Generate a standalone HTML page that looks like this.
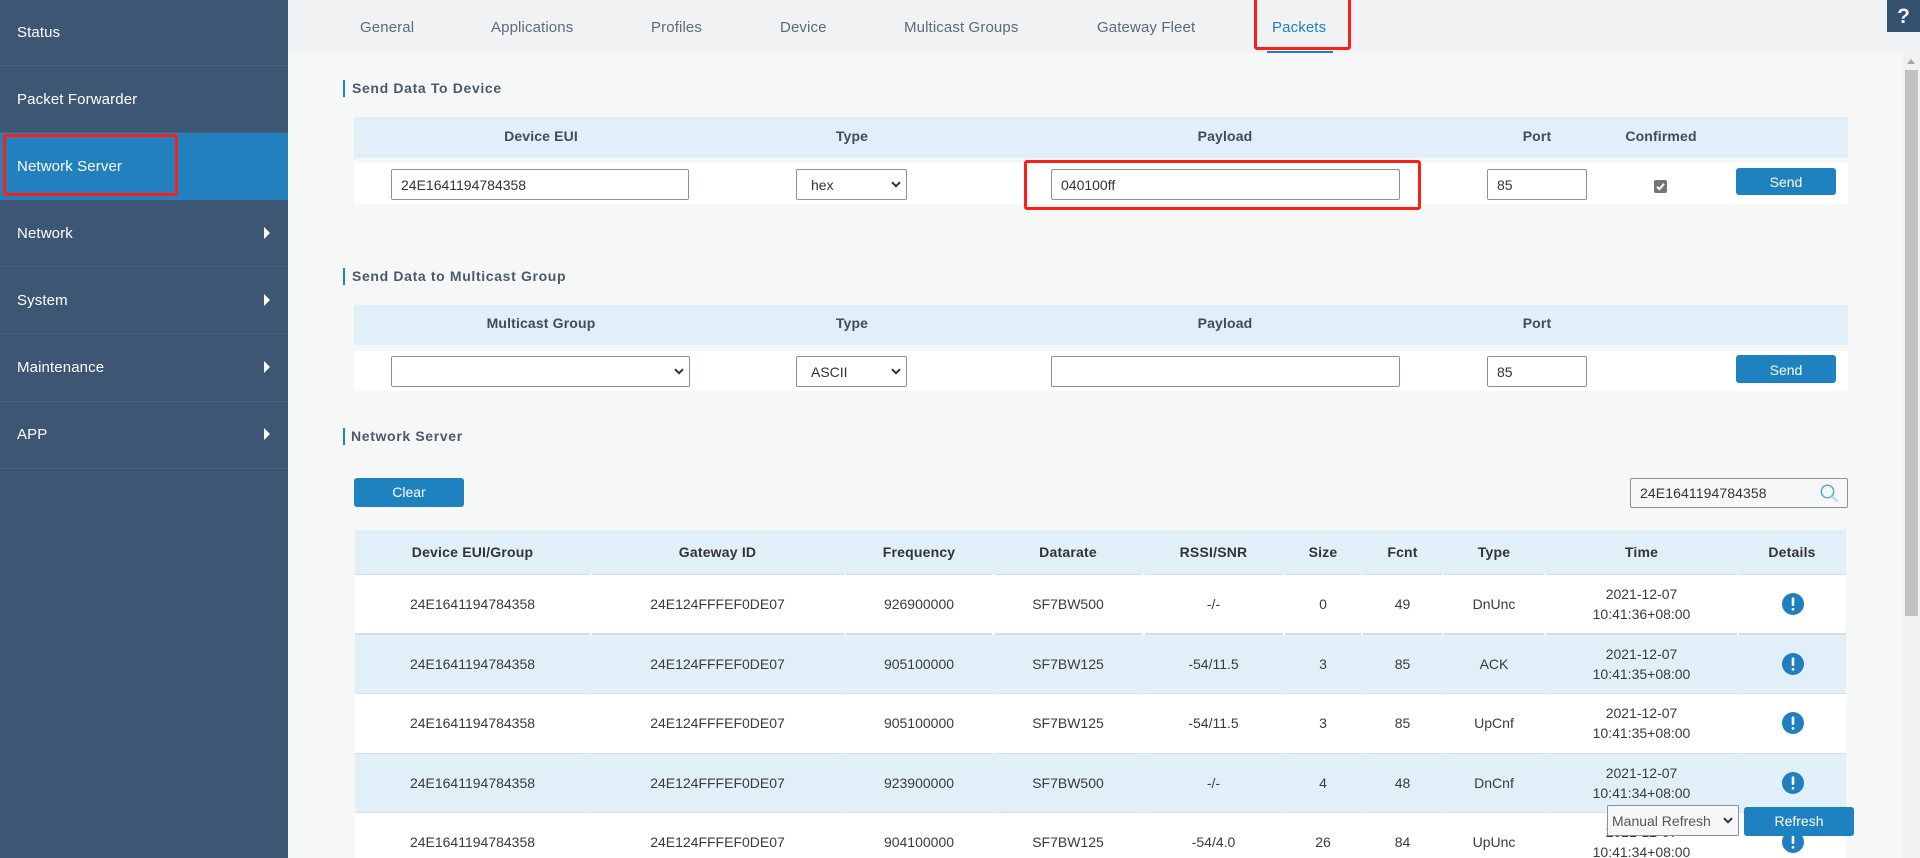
<!DOCTYPE html>
<html lang="en">
<head>
<meta charset="utf-8">
<title>Packets</title>
<style>
*{box-sizing:border-box}
html,body{margin:0;padding:0;width:1920px;height:858px;overflow:hidden;background:#f6f8f8}
#p{position:relative;width:1920px;height:858px;overflow:hidden;background:#f6f8f8;font-family:"Liberation Sans",Arial,sans-serif;font-size:14px;color:#333}
.a{position:absolute}
#side{left:0;top:0;width:288px;height:858px;background:#3c5673}
.it{position:absolute;left:0;width:288px;color:#fff;font-size:15px;letter-spacing:.12px;padding-left:17px;border-bottom:1px solid #4a627f;white-space:nowrap}
.it i{position:absolute;left:264px;width:0;height:0;border-left:6px solid #fff;border-top:6px solid transparent;border-bottom:6px solid transparent}
#tabs{left:288px;top:0;width:1632px;height:53px;background:#f0f2f4}
.tab{position:absolute;top:18px;line-height:20px;font-size:15px;letter-spacing:.12px;color:#5a6b7c;white-space:nowrap}
#ul{left:1267px;top:51px;width:66px;height:2px;background:#2080c0}
#sb{left:1903px;top:53px;width:17px;height:805px;background:#f1f1f1}
#thumb{left:1905px;top:70px;width:13px;height:546px;background:#c1c1c1}
#arr{left:1907px;top:59px;width:0;height:0;border-left:4px solid transparent;border-right:4px solid transparent;border-bottom:5px solid #a3a3a3}
#help{left:1887px;top:0;width:33px;height:32px;background:#34506f;color:#f0f2f6;font-weight:bold;font-size:21px;line-height:33px;text-align:center}
.tt{position:absolute;left:343px;height:17px;border-left:2px solid #2080c0;padding-left:7px;font-weight:bold;font-size:14px;line-height:17px;color:#4a5a6b;letter-spacing:.65px;white-space:nowrap}
.hb{position:absolute;left:354px;width:1494px;background:#e1eff9}
.wb{position:absolute;left:354px;width:1494px;background:#fff}
.h{position:absolute;width:200px;text-align:center;font-weight:bold;font-size:14px;line-height:20px;color:#414b5e;letter-spacing:.15px;white-space:nowrap}
input[type=text],select{position:absolute;margin:0;background:#fff;border:1px solid #8a9299;border-radius:2px;font-family:"Liberation Sans",Arial,sans-serif;font-size:14px;color:#333;outline:none}
input[type=text]{padding:0 9px}
select{padding:0 14px;appearance:none;-webkit-appearance:none}
.chev{position:absolute;width:10px;height:7px;pointer-events:none}
.btn{position:absolute;background:#1f82c0;color:#fff;border-radius:3px;text-align:center;font-size:14px}
.rw{position:absolute;left:355px;width:1491px;display:flex;text-align:center;color:#3a3a3a}
.rw>div{flex:none;display:flex;align-items:center;justify-content:center;line-height:20px}
.up>div{padding-bottom:1px}
.rw>div:nth-child(1){width:235px}
.rw>div:nth-child(2){width:255px}
.rw>div:nth-child(3){width:148px}
.rw>div:nth-child(4){width:150px}
.rw>div:nth-child(5){width:141px}
.rw>div:nth-child(6){width:78px}
.rw>div:nth-child(7){width:81px}
.rw>div:nth-child(8){width:102px}
.rw>div:nth-child(9){width:193px}
.rw>div:nth-child(10){width:108px;padding-left:2px}
.th{font-weight:bold;color:#333;letter-spacing:.2px;background:#e1eff9}
.bl{background:#e1eff9}
.wh{background:#fff}
.ln{position:absolute;left:355px;display:flex}
.ln b{display:block;flex:none;background:#d9dfe3;height:100%}
.ln b:nth-child(1){width:235px}
.ln b:nth-child(2){width:252px;margin-left:2px}
.ln b:nth-child(3){width:146px;margin-left:2px}
.ln b:nth-child(4){width:147px;margin-left:3px}
.ln b:nth-child(5){width:138px;margin-left:3px}
.ln b:nth-child(6){width:76px;margin-left:2px}
.ln b:nth-child(7){width:79px;margin-left:2px}
.ln b:nth-child(8){width:100px;margin-left:2px}
.ln b:nth-child(9){width:191px;margin-left:2px}
.ln b:nth-child(10){width:107px;margin-left:2px}
.ln.k b{background:#dcdcdc}
.red{position:absolute;border:3px solid #fb2017;border-radius:3px;pointer-events:none}
svg{display:block}
</style>
</head>
<body>
<div id="p">

<div class="a" id="side">
  <div class="it" style="top:0;height:66px;line-height:66px">Status</div>
  <div class="it" style="top:66px;height:67px;line-height:68px">Packet Forwarder</div>
  <div class="it" style="top:133px;height:67px;line-height:68px;background:#2280bf;border-bottom-color:#2280bf">Network Server</div>
  <div class="it" style="top:200px;height:67px;line-height:68px">Network<i style="top:27px"></i></div>
  <div class="it" style="top:267px;height:67px;line-height:68px">System<i style="top:27px"></i></div>
  <div class="it" style="top:334px;height:68px;line-height:68px">Maintenance<i style="top:27px"></i></div>
  <div class="it" style="top:402px;height:67px;line-height:66px">APP<i style="top:26px"></i></div>
</div>

<div class="a" id="tabs"></div>
<div class="tab" style="left:360px">General</div>
<div class="tab" style="left:491px">Applications</div>
<div class="tab" style="left:651px">Profiles</div>
<div class="tab" style="left:780px">Device</div>
<div class="tab" style="left:904px">Multicast Groups</div>
<div class="tab" style="left:1097px">Gateway Fleet</div>
<div class="tab" style="left:1272px;color:#2080c0">Packets</div>
<div class="a" id="ul"></div>

<div class="a" id="sb"></div>
<div class="a" id="thumb"></div>
<div class="a" id="arr"></div>
<div class="a" id="help">?</div>

<!-- Send Data To Device -->
<div class="tt" style="top:80px">Send Data To Device</div>
<div class="hb" style="top:117px;height:41px"></div>
<div class="wb" style="top:163px;height:41px"></div>
<div class="h" style="left:441px;top:126px">Device EUI</div>
<div class="h" style="left:752px;top:126px">Type</div>
<div class="h" style="left:1125px;top:126px">Payload</div>
<div class="h" style="left:1437px;top:126px">Port</div>
<div class="h" style="left:1561px;top:126px">Confirmed</div>
<input type="text" value="24E1641194784358" style="left:391px;top:169px;width:298px;height:31px">
<select style="left:796px;top:169px;width:111px;height:31px"><option>hex</option></select>
<svg class="chev" style="left:891px;top:181px" viewBox="0 0 10 7"><path d="M1 1.2L5 5.2L9 1.2" fill="none" stroke="#333" stroke-width="2"/></svg>
<input type="text" value="040100ff" style="left:1051px;top:169px;width:349px;height:31px">
<input type="text" value="85" style="left:1487px;top:169px;width:100px;height:31px">
<svg class="a" style="left:1654px;top:180px" width="13" height="13" viewBox="0 0 13 13"><rect width="13" height="13" rx="2" fill="#757575"/><path d="M3 6.8L5.4 9.2L10 3.8" fill="none" stroke="#fff" stroke-width="2"/></svg>
<div class="btn" style="left:1736px;top:168px;width:100px;height:27px;line-height:28px">Send</div>

<!-- Send Data to Multicast Group -->
<div class="tt" style="top:268px">Send Data to Multicast Group</div>
<div class="hb" style="top:305px;height:40px"></div>
<div class="wb" style="top:351px;height:40px"></div>
<div class="h" style="left:441px;top:313px">Multicast Group</div>
<div class="h" style="left:752px;top:313px">Type</div>
<div class="h" style="left:1125px;top:313px">Payload</div>
<div class="h" style="left:1437px;top:313px">Port</div>
<select style="left:391px;top:356px;width:299px;height:31px"><option></option></select>
<svg class="chev" style="left:674px;top:368px" viewBox="0 0 10 7"><path d="M1 1.2L5 5.2L9 1.2" fill="none" stroke="#333" stroke-width="2"/></svg>
<select style="left:796px;top:356px;width:111px;height:31px"><option>ASCII</option></select>
<svg class="chev" style="left:891px;top:368px" viewBox="0 0 10 7"><path d="M1 1.2L5 5.2L9 1.2" fill="none" stroke="#333" stroke-width="2"/></svg>
<input type="text" value="" style="left:1051px;top:356px;width:349px;height:31px">
<input type="text" value="85" style="left:1487px;top:356px;width:100px;height:31px">
<div class="btn" style="left:1736px;top:355px;width:100px;height:28px;line-height:31px">Send</div>

<!-- Network Server -->
<div class="tt" style="top:428px;padding-left:6px">Network Server</div>
<div class="btn" style="left:354px;top:478px;width:110px;height:29px;line-height:29px">Clear</div>
<input type="text" value="24E1641194784358" style="left:1630px;top:478px;width:218px;height:30px;background:#f6f8f8;border-color:#8a9299;letter-spacing:.1px">
<svg class="a" style="left:1818px;top:483px" width="22" height="20" viewBox="0 0 22 20"><circle cx="9.5" cy="8.5" r="6.2" fill="none" stroke="#55a8d0" stroke-width="1.5"/><path d="M14 13.2L19.5 18.5" stroke="#a6d3e8" stroke-width="1.7" fill="none"/></svg>

<!-- Table -->
<div class="rw th" style="top:530px;height:44px">
  <div>Device EUI/Group</div><div>Gateway ID</div><div>Frequency</div><div>Datarate</div><div>RSSI/SNR</div><div>Size</div><div>Fcnt</div><div>Type</div><div>Time</div><div style="padding-left:0">Details</div>
</div>

<div class="rw wh up" style="top:574px;height:61px">
  <div>24E1641194784358</div><div>24E124FFFEF0DE07</div><div>926900000</div><div>SF7BW500</div><div>-/-</div><div>0</div><div>49</div><div>DnUnc</div><div>2021-12-07<br>10:41:36+08:00</div>
  <div><svg width="22" height="22" viewBox="0 0 22 22"><circle cx="11" cy="11" r="11" fill="#1f7fbf"/><rect x="9.7" y="4.5" width="2.6" height="8.5" rx="1" fill="#fff"/><rect x="9.7" y="15" width="2.6" height="2.6" rx="1" fill="#fff"/></svg></div>
</div>
<div class="rw bl up" style="top:635px;height:59px">
  <div>24E1641194784358</div><div>24E124FFFEF0DE07</div><div>905100000</div><div>SF7BW125</div><div>-54/11.5</div><div>3</div><div>85</div><div>ACK</div><div>2021-12-07<br>10:41:35+08:00</div>
  <div><svg width="22" height="22" viewBox="0 0 22 22"><circle cx="11" cy="11" r="11" fill="#1f7fbf"/><rect x="9.7" y="4.5" width="2.6" height="8.5" rx="1" fill="#fff"/><rect x="9.7" y="15" width="2.6" height="2.6" rx="1" fill="#fff"/></svg></div>
</div>
<div class="rw wh up" style="top:694px;height:59px">
  <div>24E1641194784358</div><div>24E124FFFEF0DE07</div><div>905100000</div><div>SF7BW125</div><div>-54/11.5</div><div>3</div><div>85</div><div>UpCnf</div><div>2021-12-07<br>10:41:35+08:00</div>
  <div><svg width="22" height="22" viewBox="0 0 22 22"><circle cx="11" cy="11" r="11" fill="#1f7fbf"/><rect x="9.7" y="4.5" width="2.6" height="8.5" rx="1" fill="#fff"/><rect x="9.7" y="15" width="2.6" height="2.6" rx="1" fill="#fff"/></svg></div>
</div>
<div class="rw bl up" style="top:753px;height:60px">
  <div>24E1641194784358</div><div>24E124FFFEF0DE07</div><div>923900000</div><div>SF7BW500</div><div>-/-</div><div>4</div><div>48</div><div>DnCnf</div><div>2021-12-07<br>10:41:34+08:00</div>
  <div><svg width="22" height="22" viewBox="0 0 22 22"><circle cx="11" cy="11" r="11" fill="#1f7fbf"/><rect x="9.7" y="4.5" width="2.6" height="8.5" rx="1" fill="#fff"/><rect x="9.7" y="15" width="2.6" height="2.6" rx="1" fill="#fff"/></svg></div>
</div>
<div class="rw wh up" style="top:813px;height:59px">
  <div>24E1641194784358</div><div>24E124FFFEF0DE07</div><div>904100000</div><div>SF7BW125</div><div>-54/4.0</div><div>26</div><div>84</div><div>UpUnc</div><div>2021-12-07<br>10:41:34+08:00</div>
  <div><svg width="22" height="22" viewBox="0 0 22 22"><circle cx="11" cy="11" r="11" fill="#1f7fbf"/><rect x="9.7" y="4.5" width="2.6" height="8.5" rx="1" fill="#fff"/><rect x="9.7" y="15" width="2.6" height="2.6" rx="1" fill="#fff"/></svg></div>
</div>

<div class="ln" style="top:574px;height:1px"><b></b><b></b><b></b><b></b><b></b><b></b><b></b><b></b><b></b><b></b></div>
<div class="ln k" style="top:633px;height:2px"><b></b><b></b><b></b><b></b><b></b><b></b><b></b><b></b><b></b><b></b></div>
<div class="ln" style="top:693px;height:1px"><b></b><b></b><b></b><b></b><b></b><b></b><b></b><b></b><b></b><b></b></div>
<div class="ln" style="top:753px;height:1px"><b></b><b></b><b></b><b></b><b></b><b></b><b></b><b></b><b></b><b></b></div>
<div class="ln" style="top:812px;height:1px"><b></b><b></b><b></b><b></b><b></b><b></b><b></b><b></b><b></b><b></b></div>

<!-- Floating refresh -->
<select style="left:1607px;top:805px;width:132px;height:31px;background:#f6f8f8;color:#555;padding:0 4px"><option>Manual Refresh</option></select>
<svg class="chev" style="left:1723px;top:817px" viewBox="0 0 10 7"><path d="M1 1.2L5 5.2L9 1.2" fill="none" stroke="#333" stroke-width="2"/></svg>
<div class="btn" style="left:1744px;top:807px;width:110px;height:29px;line-height:29px">Refresh</div>

<!-- Annotation boxes -->
<div class="red" style="left:3px;top:134px;width:175px;height:62px"></div>
<div class="red" style="left:1024px;top:160px;width:397px;height:50px"></div>
<div class="red" style="left:1254px;top:-3px;width:97px;height:53px"></div>

</div>
</body>
</html>
